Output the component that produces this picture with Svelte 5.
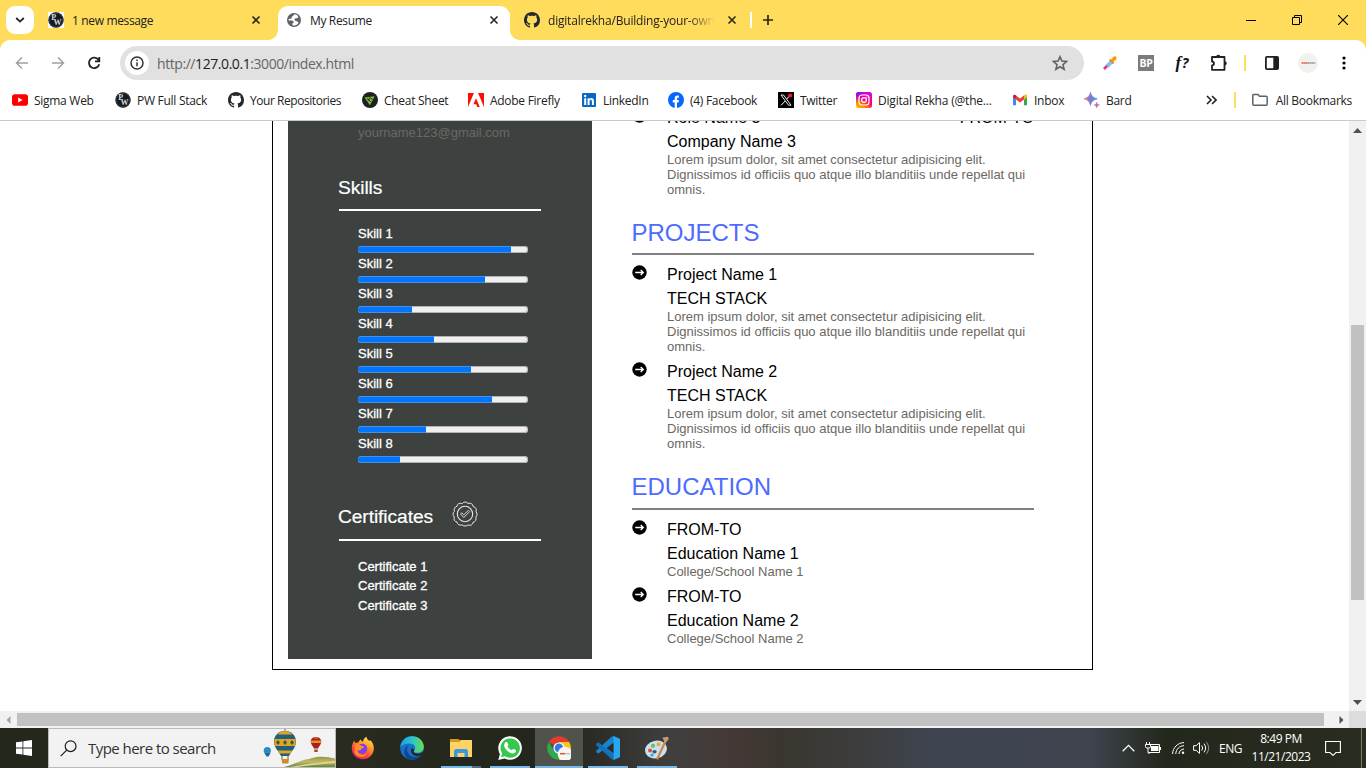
<script>
  const bookmarks = [
    { icon: 'youtube', label: 'Sigma Web', w: 103 },
    { icon: 'pw', label: 'PW Full Stack', w: 113 },
    { icon: 'github', label: 'Your Repositories', w: 134 },
    { icon: 'cheat', label: 'Cheat Sheet', w: 106 },
    { icon: 'adobe', label: 'Adobe Firefly', w: 113 },
    { icon: 'linkedin', label: 'LinkedIn', w: 87 },
    { icon: 'facebook', label: '(4) Facebook', w: 110 },
    { icon: 'x', label: 'Twitter', w: 78 },
    { icon: 'instagram', label: 'Digital Rekha (@the...', w: 156 },
    { icon: 'gmail', label: 'Inbox', w: 72 },
    { icon: 'bard', label: 'Bard', w: 72 }
  ];
  const skills = [90, 74.7, 31.7, 44.7, 66.5, 79, 40, 24.7];
  const certificates = [1, 2, 3];
  const projects = [1, 2];
  const schools = [1, 2];
  const apps = ['firefox', 'edge', 'explorer', 'whatsapp', 'chrome', 'vscode', 'paint'];
</script>

{#snippet closeIcon()}
  <svg class="close" width="10" height="10" viewBox="0 0 10 10"><path d="M1.5 1.5 8.5 8.5M8.5 1.5 1.5 8.5" stroke="#2b2718" stroke-width="1.6" /></svg>
{/snippet}

{#snippet arrowBullet()}
  <svg class="bullet" width="15" height="15" viewBox="0 0 15 15"><circle cx="7.5" cy="7.5" r="7.2" /><path d="M3.2 7.5h8M8.7 5l2.6 2.5L8.7 10" fill="none" stroke="#fff" stroke-width="1.3" /></svg>
{/snippet}

{#snippet lorem()}
  <p class="lorem">Lorem ipsum dolor, sit amet consectetur adipisicing elit. Dignissimos id officiis quo atque illo blanditiis unde repellat qui omnis.</p>
{/snippet}

{#snippet siteIcon(name)}
  <svg class="site" width="16" height="16" viewBox="0 0 16 16">
    {#if name === 'youtube'}
      <rect y="2.3" width="16" height="11.4" rx="2.8" fill="#f00" /><path d="M6.2 5.6v4.8L10.6 8z" fill="#fff" />
    {:else if name === 'pw'}
      <circle cx="8" cy="8" r="7.7" fill="#151a20" />
      <circle cx="8" cy="8" r="7" fill="none" stroke="#4b5056" stroke-width=".7" />
      <text x="3.2" y="8.4" class="monogram">P</text><text x="5.6" y="13.2" class="monogram">W</text>
    {:else if name === 'github'}
      <path fill="#24292f" d="M8 0C3.58 0 0 3.58 0 8c0 3.54 2.29 6.53 5.47 7.59.4.07.55-.17.55-.38 0-.19-.01-.82-.01-1.49-2.01.37-2.53-.49-2.69-.94-.09-.23-.48-.94-.82-1.13-.28-.15-.68-.52-.01-.53.63-.01 1.08.58 1.23.82.72 1.21 1.87.87 2.33.66.07-.52.28-.87.51-1.07-1.78-.2-3.64-.89-3.64-3.95 0-.87.31-1.59.82-2.15-.08-.2-.36-1.02.08-2.12 0 0 .67-.21 2.2.82.64-.18 1.32-.27 2-.27s1.36.09 2 .27c1.53-1.04 2.2-.82 2.2-.82.44 1.1.16 1.92.08 2.12.51.56.82 1.27.82 2.15 0 3.07-1.87 3.75-3.65 3.95.29.25.54.73.54 1.48 0 1.07-.01 1.93-.01 2.2 0 .21.15.46.55.38A8.01 8.01 0 0 0 16 8c0-4.42-3.58-8-8-8z" />
    {:else if name === 'cheat'}
      <circle cx="8" cy="8" r="8" fill="#1d2025" /><path d="M2.5 5.6 12.6 4.2 8 13.2z" fill="#86bd34" /><path d="M5 6.6 8.7 9.7M8.2 5.5l2.2 2.4M6.3 8.5l1.5-2.7" stroke="#1d2025" stroke-width="1" />
    {:else if name === 'adobe'}
      <path fill="#fa0f00" d="M0 1h5.9L0 15zM10.1 1H16v14zM8 6.2 11.8 15H9.3l-1.1-2.8H5.4z" />
    {:else if name === 'linkedin'}
      <rect x="1" y="1" width="14" height="14" rx="1" fill="#0a66c2" /><path fill="#fff" d="M3.2 6.2h2V13h-2zM6.6 6.2h2v1c.9-1.7 4.3-1.6 4.3 1.6V13h-2V9.4c0-2.2-2.3-2-2.3 0V13h-2z" /><circle cx="4.2" cy="4" r="1.2" fill="#fff" />
    {:else if name === 'facebook'}
      <circle cx="8" cy="8" r="8" fill="#0866ff" /><path fill="#fff" d="M6.7 16v-5.5H4.8V8h1.9V6.7c0-2.5 1.3-3.5 4.2-3v2.1c-1.5-.1-1.9.1-1.9 1.1V8h1.9l-.4 2.5H9V16z" />
    {:else if name === 'x'}
      <path d="M0 0h16v16H0z" /><path d="M3 3h2.5l7.5 10.2h-2.5z" fill="none" stroke="#fff" stroke-width=".9" /><path d="M12.2 3 8.8 7M7.2 9 3 13.4" stroke="#fff" stroke-width="1" /><circle cx="12.2" cy="3.5" r="2.1" fill="#ff1430" />
    {:else if name === 'instagram'}
      <defs>
        <linearGradient id="ig" x1=".1" y1="1" x2=".75" y2="0"><stop stop-color="#ffc800" /><stop offset=".3" stop-color="#ff7400" /><stop offset=".55" stop-color="#ff0076" /><stop offset="1" stop-color="#d800ec" /></linearGradient>
        <radialGradient id="igb" cx="0" cy="0" r=".7"><stop stop-color="#6a1cff" /><stop offset="1" stop-color="#a000ff" stop-opacity="0" /></radialGradient>
      </defs>
      <rect width="16" height="16" rx="2.6" fill="url(#ig)" /><rect width="16" height="16" rx="2.6" fill="url(#igb)" />
      <rect x="3" y="3" width="10" height="10" rx="3" fill="none" stroke="#fff" stroke-width="1.2" /><circle cx="8" cy="8" r="2.4" fill="none" stroke="#fff" stroke-width="1.2" /><circle cx="10.9" cy="5.1" r=".7" fill="#fff" />
    {:else if name === 'gmail'}
      <path d="M1 4.2v9h3V7.4z" fill="#4285f4" /><path d="M12 7.4v5.8h3v-9z" fill="#34a853" /><path d="M1 4.4c0-2 1.7-2 2.6-1.3L4.2 3.6v4L1 5.3z" fill="#c5221f" /><path d="M4 3.4 8 6.5l4-3.1v4L8 10.5 4 7.4z" fill="#ea4335" /><path d="m12 3.4.5-.4c1-.7 2.5-.5 2.5 1.2v1.1l-3 2.2z" fill="#fbbc04" />
    {:else}
      <defs><linearGradient id="bd"><stop stop-color="#f08a5e" /><stop offset=".4" stop-color="#8b78cf" /><stop offset="1" stop-color="#3d8bea" /></linearGradient></defs>
      <path fill="url(#bd)" d="M6.5.2C7.5 4.2 9 5.7 13.2 6.8 9 7.9 7.5 9.3 6.5 13.5 5.5 9.3 4 7.9-.2 6.8 4 5.7 5.5 4.2 6.5.2z" stroke="url(#bd)" stroke-width=".7" /><path fill="#b66aa9" stroke="#b66aa9" stroke-width=".5" d="M12.7 10.2c.5 1.9 1 2.4 2.9 2.8-1.9.4-2.4 1-2.9 2.8-.5-1.8-1-2.4-2.8-2.8 1.8-.4 2.3-.9 2.8-2.8z" />
    {/if}
  </svg>
{/snippet}

{#snippet appIcon(name)}
  <svg width="24" height="24" viewBox="0 0 24 24">
    {#if name === 'firefox'}
      <defs><linearGradient id="ff" x1=".85" y1="0" x2=".3" y2="1"><stop stop-color="#fff04a" /><stop offset=".4" stop-color="#ff9a22" /><stop offset=".75" stop-color="#ff3b47" /><stop offset="1" stop-color="#e5226b" /></linearGradient></defs>
      <path fill="url(#ff)" d="M3.2 4.5c.2 1.2.7 2 1.3 2.5.9-.5 2-.7 3-.5C8 4.8 9.2 3.8 10 3.5c0 1 .5 1.7 2 2.2C12 3.5 13.5 1.5 15.5.7c0 2 1.500 3 3 4.500.2-.5.2-1 .1-1.400C21.500 6 23 9 22.800 13c-.3 5.500-5 10.200-11 10.200C5.500 23.200.8 18.500.8 12.500c0-3 .9-5.500 2.400-8z" />
      <circle cx="11.3" cy="12.7" r="5" fill="#7a3ff0" /><path fill="#ff9124" d="M4 9.5c2.5-1.5 5-1 6.5.5 1.2 0 2.6.2 2.5 1-.3 1.2-2 1-2.8 2.2-1.2 1.8-3 1.500-3.700.4C6 18 11 20.500 16 17.500c-2 5-11 5-12.500-1.500z" />
    {:else if name === 'edge'}
      <defs><linearGradient id="eg" x1="0" y1=".4" x2="1" y2=".4"><stop stop-color="#1e9de2" /><stop offset=".5" stop-color="#2cc3d1" /><stop offset="1" stop-color="#68df4a" /></linearGradient><linearGradient id="eb" x1="0" y1="0" x2="0" y2="1"><stop stop-color="#1679c7" /><stop offset="1" stop-color="#1a68c5" /></linearGradient></defs>
      <circle cx="12" cy="12" r="11.8" fill="url(#eb)" /><path fill="url(#eg)" d="M.2 11.5C.8 5 5.5.2 12 .2c7 0 11.8 5 11.8 10.3 0 4.5-3.5 6.3-6.3 6.3-2.5 0-4.2-.8-3.2-2.3 2.5-3.7-.6-7-4.5-7C5.5 7.5 1.5 9 .2 11.5z" /><path fill="#0c4790" d="M9.5 8.5C6.5 10.5 6.5 14 8 17c1.7 3.5 6.5 6 13 2.2-3.5 5.8-12.5 6-15.5.8C3 15.5 5 10 9.5 8.5z" /><path fill="#24291f" d="M14 14.5c-1.2 1.8 1 3 3.6 3 2.4 0 4.2-.6 5.4-1.5l1 .5-1.3 2.3c-2.2 1-4.2 1.4-6 1.2-4-.5-6.5-3.5-5.5-7.2.5-1.5 3.5-.3 2.8 1.7z" />
    {:else if name === 'explorer'}
      <path fill="#d99b1a" d="M1 3h8.5l1.5 1.5L9.5 7H1z" /><path fill="#fcd364" d="M1 6h9l1.5-2H23v17H1z" /><path fill="#3b97df" d="M5 21v-5.5c0-1.5 1-2.5 2.5-2.5h9c1.5 0 2.5 1 2.5 2.5V21h-3.500v-4h-7v4z" /><path fill="#fcd364" d="M9.5 17h5v3h-5z" />
    {:else if name === 'whatsapp'}
      <path fill="#fff" d="M.3 24l1.6-6A11.8 11.8 0 1 1 6.5 22.4z" /><path fill="#35c84e" d="m3 21.3 1.1-3.9A9.7 9.7 0 1 1 6.9 20.2z" /><path fill="#fff" d="M8.3 6c.6 0 .9.1 1.1.6l.9 2c.2.5-.4 1.2-.9 1.7 1 1.9 2.6 3.3 4.5 4 .6-.6 1.2-1.5 1.7-1.2l2.1 1c.5.3.4.8.2 1.4-.6 1.5-2.4 2.1-3.7 1.9-3.5-.6-6.9-4-7.9-7C5.8 8.5 6.8 6 8.3 6z" />
    {:else if name === 'chrome'}
      <path fill="#e33b2e" d="M12 12 1.8 6A11.8 11.8 0 0 1 22.2 6z" /><path fill="#fcc31e" d="M12 12V6h10.2A11.8 11.8 0 0 1 12 23.8z" /><path fill="#2da94f" d="M1.8 6 7 15l5 2.5V23.8A11.8 11.8 0 0 1 1.8 6z" /><circle cx="12" cy="12" r="5.6" fill="#fff" /><circle cx="12" cy="12" r="4.4" fill="#3478e5" /><circle cx="18" cy="18" r="7.3" fill="#f7f6f4" /><path d="M13 17.7h5" stroke="#db5337" stroke-width="1.5" /><path d="M18.2 17.7h5" stroke="#aaa" stroke-width="1" />
    {:else if name === 'vscode'}
      <path fill="#1684ce" d="m17.5 0 6 2.7v18.6l-6 2.7L7 14.1 2.5 17.5.2 16.2v-1.4l15.3-14z" /><path fill="#2aa7f2" d="M17.5 0 24 3v18l-6.5 3z" /><path fill="#1273ba" d="M2.5 6.5.2 7.8v1.4L15.5 23l2 .8V17.7z" /><path fill="#2a2b26" d="M17.5 6.7v10.6L10.6 12z" />
    {:else}
      <ellipse cx="11" cy="13.5" rx="11" ry="8.8" fill="#c7e2f3" transform="rotate(-12 11 13.5)" /><circle cx="5" cy="14.5" r="2" fill="#d94f48" /><circle cx="8" cy="9.8" r="2.1" fill="#7db84b" /><circle cx="13.5" cy="8.2" r="2" fill="#f0a63a" /><ellipse cx="9.5" cy="15.8" rx="2.2" ry="1.7" fill="#315b7a" /><circle cx="7" cy="19" r="1.6" fill="#4a96d0" /><path d="m20.5 5-8 17.5" stroke="#d5883d" stroke-width="2.3" stroke-linecap="round" /><path fill="#c69a70" d="m17.5 1.5 5.5-.7.8 2.5-3.8 4z" />
    {/if}
  </svg>
{/snippet}

<div class="screen">
  <header class="tabs">
    <div class="tab-search"><svg width="10" height="8" viewBox="0 0 10 8"><path d="m1.2 2 3.8 3.6L8.8 2" fill="none" stroke="#222" stroke-width="1.8" /></svg></div>
    <div class="tab first"><span class="fav white">{@render siteIcon('pw')}</span><span class="title">1 new message</span>{@render closeIcon()}</div>
    <div class="tab active">
      <svg class="globe" width="14" height="14" viewBox="0 0 14 14"><circle cx="7" cy="7" r="7" fill="#5f6368" /><path fill="#fff" d="M7.5 1.3C6.5 2 6.4 3 5.5 3.3 4.3 3.6 5 5 4.3 5.5 3.6 6 2.3 5.7 1.4 6.3c0 1 .6 1.4 1.6 1.3 1.6-.1 3.6 0 3.7 1.3.1 1.3-1.3.8-1.4 2-.1.7.3 1.3.9 1.7 2.3.3 4.5-1 5.5-3-1-.3-1.3-1.6-2.5-1.7-1.5-.1-2-.9-1.6-1.9.4-1.2 2-.6 2.9-1 .6-.3.5-1 .6-1.7C10.2 2 9 1.4 7.5 1.3z" /></svg>
      <span class="title">My Resume</span>{@render closeIcon()}
    </div>
    <div class="tab third"><span class="fav">{@render siteIcon('github')}</span><span class="title fade">digitalrekha/Building-your-own</span>{@render closeIcon()}</div>
    <i class="tab-sep"></i>
    <svg class="plus" width="12" height="12" viewBox="0 0 12 12"><path d="M6 1v10M1 6h10" stroke="#2b2718" stroke-width="1.7" /></svg>
    <div class="window-controls">
      <svg width="10" height="10" viewBox="0 0 10 10"><path d="M0 5.5h10" stroke="#000" /></svg>
      <svg width="10" height="10" viewBox="0 0 10 10"><path d="M.5 2.5h7v7h-7zM2.5 2.5v-2h7v7h-2" fill="none" stroke="#000" /></svg>
      <svg width="10" height="10" viewBox="0 0 10 10"><path d="m0 0 10 10M10 0 0 10" stroke="#000" stroke-width="1.1" /></svg>
    </div>
  </header>

  <div class="toolbar-back">
    <div class="toolbar">
      <svg class="nav" width="14" height="14" viewBox="0 0 14 14"><path d="M13 7H2M7 1.5 1.5 7 7 12.5" fill="none" stroke="#a0a0a0" stroke-width="1.5" /></svg>
      <svg class="nav" width="14" height="14" viewBox="0 0 14 14"><path d="M1 7h11M7 1.5 12.5 7 7 12.5" fill="none" stroke="#a0a0a0" stroke-width="1.5" /></svg>
      <svg class="nav" width="14" height="14" viewBox="0 0 14 14"><path d="M11.5 4A5.2 5.2 0 1 0 12.2 8.2M12.3 1v4.3H8" fill="none" stroke="#202124" stroke-width="1.8" /></svg>
      <div class="address">
        <span class="info"><svg width="14" height="14" viewBox="0 0 14 14"><circle cx="7" cy="7" r="6" fill="none" stroke="#333" stroke-width="1.5" /><path d="M7 6.2v4M7 3.5v1.5" stroke="#333" stroke-width="1.5" /></svg></span>
        <span class="url">http://<b>127.0.0.1</b>:3000/index.html</span>
        <svg class="star" width="16" height="16" viewBox="0 0 16 16"><path d="m8 1.7 1.9 4.4 4.7.4L11 9.6l1.1 4.7L8 11.8l-4.1 2.5L5 9.6 1.4 6.5l4.7-.4z" fill="none" stroke="#5f6368" stroke-width="1.6" /></svg>
      </div>
      <svg class="dropper" width="14" height="14" viewBox="0 0 14 14"><path d="m2.5 9 4.3-4.3 2.8 2.8L5.2 12z" fill="#74c6f5" /><path d="M1 13 4 9.9" stroke="#ed2b79" stroke-width="2.6" /><path d="m6 4 1.2-1 4 4-1.2 1z" fill="#ef6c00" /><path d="m8 3.7 2.5-2.9c2-1.5 4 .7 2.6 2.6L10.2 6z" fill="#ff9800" /></svg>
      <span class="bp">BP</span>
      <span class="fq">f<i>?</i></span>
      <svg class="puzzle" width="18" height="18" viewBox="0 0 18 18"><path d="M2 3h12.5v12.8H2v-4.3c2.6-.2 2.6-3.7 0-4z" fill="none" stroke="#202124" stroke-width="1.8" stroke-linejoin="round" /><path d="M6.2 3a2.1 2.3 0 0 1 4.2 0zM14.5 7.2a2.3 2.1 0 0 1 0 4.2z" fill="#202124" /></svg>
      <i class="yellow-sep"></i>
      <svg class="panel" width="14" height="14" viewBox="0 0 14 14"><rect x=".9" y=".9" width="12.2" height="12.2" rx="1" fill="none" stroke="#202124" stroke-width="1.8" /><path d="M8.3 1H13v12H8.3z" fill="#202124" /></svg>
      <svg class="profile" width="20" height="20" viewBox="0 0 20 20"><circle cx="10" cy="10" r="10" fill="#f3f1ee" /><path d="M3.5 10H10" stroke="#e46449" stroke-width="1.7" stroke-dasharray="1.8 .2" /><path d="M10 10h7.5" stroke="#666" stroke-width="1.2" stroke-dasharray="1.5 .3" /></svg>
      <svg class="kebab" width="4" height="14" viewBox="0 0 4 14"><circle cx="2" cy="2" r="1.6" /><circle cx="2" cy="7" r="1.6" /><circle cx="2" cy="12" r="1.6" /></svg>
    </div>
    <nav class="bookmarks">
      {#each bookmarks as mark}
        <div class="bookmark {mark.icon}" style:width="{mark.w}px">{@render siteIcon(mark.icon)}<span>{mark.label}</span></div>
      {/each}
      <div class="bookmark-end">
        <svg width="11" height="10" viewBox="0 0 11 10"><path d="m1 1 4 4-4 4M6 1l4 4-4 4" fill="none" stroke="#202124" stroke-width="1.6" /></svg>
        <i class="yellow-sep"></i>
        <svg class="folder" width="16" height="14" viewBox="0 0 16 14"><path d="M1.5 1.5H6L7.5 3.2h6.7q1 0 1 1v7q0 1-1 1H1.8q-1 0-1-1V2.2q0-.7.7-.7z" fill="none" stroke="#5f6368" stroke-width="1.5" /></svg>
        <span>All Bookmarks</span>
      </div>
    </nav>
  </div>

  <div class="viewport">
    <main class="page">
      <div class="resume">
        <aside>
          <p class="email">yourname123@gmail.com</p>
          <h3 class="side-head">Skills</h3>
          <div class="skills">
            {#each skills as level, i}
              <div class="skill"><span>Skill {i + 1}</span><div class="meter"><div class="fill" style:width="{level}%"></div></div></div>
            {/each}
          </div>
          <h3 class="side-head certs">Certificates
            <svg width="26" height="26" viewBox="0 0 26 26" fill="none" stroke="#e7e9e8"><path d="M13 1q2 0 3 1.5 2-.8 3.5.2t1.6 2.8q2 .3 2.8 2t.1 3.3Q25 12 25 13.500t-1.200 2.700q.7 1.800-.2 3.300t-2.600 1.800q-.2 2-1.700 2.700t-3.300-.1Q15 25 13 25t-3-1.200q-1.800.8-3.300-.1T5 21q-2-.3-2.700-1.800t.1-3.200Q1 15 1 13.300t1.400-2.900q-.7-1.800.2-3.300T5 5.300q.3-2 1.800-2.700t3.300.1Q11 1 13 1z" /><circle cx="13" cy="13" r="7.7" stroke-width="1.1" /><path d="m8.500 13 1.300-1.200 2 2 4.700-4.500 1.200 1.200-5.900 6z" stroke-width=".9" /></svg>
          </h3>
          <ul>
            {#each certificates as n}<li>Certificate {n}</li>{/each}
          </ul>
        </aside>
        <section class="body">
          <article>
            {@render arrowBullet()}
            <div class="entry"><h4 class="split"><span>Role Name 3</span><span>FROM-TO</span></h4><h5>Company Name 3</h5>{@render lorem()}</div>
          </article>
          <h2>PROJECTS</h2>
          {#each projects as n}
            <article>
              {@render arrowBullet()}
              <div class="entry"><h4>Project Name {n}</h4><h5>TECH STACK</h5>{@render lorem()}</div>
            </article>
          {/each}
          <h2 class="edu">EDUCATION</h2>
          {#each schools as n}
            <article>
              {@render arrowBullet()}
              <div class="entry"><h4>FROM-TO</h4><h5>Education Name {n}</h5><p class="school">College/School Name {n}</p></div>
            </article>
          {/each}
        </section>
      </div>
    </main>
    <div class="vbar">
      <svg width="9" height="5" viewBox="0 0 9 5"><path d="M0 5 4.5 0 9 5z" fill="#505050" /></svg>
      <div class="vthumb"></div>
      <svg width="9" height="5" viewBox="0 0 9 5"><path d="m0 0 4.5 5L9 0z" fill="#505050" /></svg>
    </div>
  </div>
  <div class="hbar">
    <svg width="5" height="8" viewBox="0 0 5 8"><path d="M4.5 0 .5 4l4 4z" fill="#a3a3a3" /></svg>
    <div class="hthumb"></div>
    <svg class="hright" width="5" height="8" viewBox="0 0 5 8"><path d="m.5 0 4 4-4 4z" fill="#505050" /></svg>
    <div class="corner"></div>
  </div>

  <footer class="taskbar">
    <div class="start"><svg width="16" height="16" viewBox="0 0 16 16" fill="#fff"><path d="M0 2.3 6.5 1.4v6.2H0zM7.3 1.3 16 0v7.6H7.3zM0 8.4h6.5v6.2L0 13.7zM7.3 8.4H16V16l-8.7-1.3z" /></svg></div>
    <div class="search">
      <svg width="17" height="17" viewBox="0 0 17 17" fill="none" stroke="#1c1c1c" stroke-width="1.2"><circle cx="10.6" cy="6.2" r="5.4" /><path d="m6.7 10.2-6 6" /></svg>
      <span>Type here to search</span>
      <svg class="balloons" width="73" height="38" viewBox="0 0 73 38">
        <defs><linearGradient id="hill" x1="0" y1="0" x2="0" y2="1"><stop stop-color="#8a9a3b" /><stop offset=".5" stop-color="#c5b76a" /><stop offset="1" stop-color="#5b8b32" /></linearGradient></defs>
        <path d="M22 38c10-2 15-7 25-8 10-4 19-2 26-.5V38z" fill="url(#hill)" /><path d="M28 38c14-3 27-4 45-6v2c-16 1-28 3-38 4z" fill="#e6d391" />
        <circle cx="5.3" cy="21.5" r="3.6" fill="#2b8cc1" /><path d="m2.5 24 2 3.500h2l2-3.500z" fill="#1a6a9b" />
        <path d="M23 2c7 0 11 4.8 11 10.7 0 5.8-5 9.8-7 14.3h-8c-2-4.5-7-8.5-7-14.3C12 6.8 16 2 23 2z" fill="#215f7a" />
        <path d="M17 4q2.5-2 6-2t6 2l1.500 1.500h-15zM12.500 10h21q.8 3.500-.7 7H13.200q-1.500-3.500-.7-7zM15.500 21.500h15l-2 3h-11z" fill="#e0a428" />
        <path d="m16 11 2 2.500-2 2.500-2-2.500zm7 0 2 2.500-2 2.500-2-2.500zm7 0 2 2.500-2 2.500-2-2.500z" fill="#395b32" /><path d="M20 27v3.500M26 27v3.500M23 0v2" stroke="#855522" /><path d="M19.500 30h7.500l-.7 4.500h-6z" fill="#cf8c25" />
        <path d="M54 8c3.500 0 5.300 2.200 5.300 4.800S57 17 56 19.500h-4c-1-2.500-3.300-4-3.300-6.700S50.500 8 54 8z" fill="#a3221d" /><path d="M49 11.500h10v2.500H49zM52 8.500h4v1h-4z" fill="#ef8d20" /><path d="M52.300 20.500h3.400v2.500h-3.400z" fill="#a54720" />
      </svg>
    </div>
    <div class="apps">
      {#each apps as app}
        <div class="app {app}">{@render appIcon(app)}</div>
      {/each}
    </div>
    <div class="tray">
      <svg width="13" height="8" viewBox="0 0 13 8"><path d="M.7 7.2 6.5 1.4l5.8 5.8" fill="none" stroke="#fff" stroke-width="1.3" /></svg>
      <svg class="battery" width="16" height="12" viewBox="0 0 16 12"><path d="M5 2.5h9.5v8H4M15.500 5v3" fill="none" stroke="#fff" /><path d="M6 4h7.500v5H6z" fill="#fff" /><path d="M1.500 0v3M4.500 0v3M.5 2.500h5v2q0 1.500-1.500 1.500H2Q.5 6 .5 4.500zM3 6v5h2" fill="none" stroke="#fff" /></svg>
      <svg class="wifi" width="13" height="12" viewBox="0 0 13 12" fill="none" stroke="#fff"><path d="M.6 12C.6 5.8 5.8.6 12 .6M3.8 12C3.8 7.5 7.5 3.7 12 3.7M7 12c0-2.7 2.3-5 5-5" /><circle cx="11" cy="10.7" r="1.2" fill="#fff" stroke="none" /></svg>
      <svg class="speaker" width="17" height="14" viewBox="0 0 17 14" fill="none" stroke="#fff"><path d="M.6 4.7h2.6L6.5 1.5v11L3.2 9.3H.6zM8.7 4.5q2 2.5 0 5M11 2.7q3.3 4.3 0 8.6" /><path d="M13.4 1q4.5 6 0 12" opacity=".5" /></svg>
      <span class="lang">ENG</span>
      <div class="clock"><span>8:49 PM</span><span>11/21/2023</span></div>
      <svg class="note" width="16" height="16" viewBox="0 0 16 16"><path d="M.6 1.5h14.8v11H11l-3 2.9-3-2.9H.6z" fill="none" stroke="#fff" stroke-width="1.1" /></svg>
      <i class="desk"></i>
    </div>
  </footer>
</div>

<style>
  :global(body) { margin: 0; overflow: hidden; }
  .screen, .screen :global(*) { box-sizing: border-box; }
  .screen { width: 1366px; height: 768px; display: flex; flex-direction: column; background: #fff; font-family: "Open Sans", "Noto Sans", sans-serif; font-size: 12px; color: #222; overflow: hidden; }
  svg { display: block; flex: none; }
  h2, h3, h4, h5, p, ul { margin: 0; padding: 0; font-weight: 400; list-style: none; }
  .monogram { font: bold 8px "Liberation Serif", serif; fill: #d8dadc; }

  .tabs { height: 40px; background: #ffdc5c; display: flex; align-items: center; flex: none; }
  .tab-search { width: 28px; height: 28px; margin-left: 6px; border-radius: 9px; background: #fff; display: grid; place-items: center; }
  .tab { display: flex; align-items: center; }
  .tab .title { flex: 1; white-space: nowrap; overflow: hidden; line-height: 18px; padding-top: 1px; letter-spacing: -.35px; }
  .first { width: 244px; padding: 0 17px 0 14px; }
  .fav { margin-right: 8px; }
  .white { background: #fff; }
  .active { position: relative; width: 232px; height: 34px; align-self: flex-end; padding: 0 11px 6px 9px; background: #fff; border-radius: 10px 10px 0 0; }
  .active .title { margin-left: 9px; }
  .active::before, .active::after { content: ""; position: absolute; bottom: 0; width: 10px; height: 10px; }
  .active::before { left: -10px; background: radial-gradient(circle at 0 0, transparent 9.5px, #fff 10.3px); }
  .active::after { right: -10px; background: radial-gradient(circle at 100% 0, transparent 9.5px, #fff 10.3px); }
  .third { width: 240px; padding: 0 13px 0 14px; }
  .tab .fade { flex: none; width: 167px; margin-right: 12px; letter-spacing: -.2px; -webkit-mask-image: linear-gradient(90deg, #000 84%, transparent); mask-image: linear-gradient(90deg, #000 84%, transparent); }
  .tab-sep { width: 2px; height: 16px; background: #fff; }
  .plus { margin-left: 10px; }
  .window-controls { margin-left: auto; display: flex; gap: 36px; padding-right: 18px; }

  .toolbar-back { height: 81px; flex: none; border-bottom: 1px solid #c9c9c9; background: linear-gradient(#ffdc5c 20px, #fff 20px); }
  .toolbar { height: 46px; display: flex; align-items: center; padding-left: 15px; background: #fff; border-radius: 10px 10px 0 0; }
  .nav { margin-right: 22px; }
  .nav:nth-child(3) { margin-right: 19px; }
  .address { width: 964px; height: 34px; border-radius: 17px; background: #e1e1e1; display: flex; align-items: center; padding: 0 16px 0 5px; }
  .info { width: 24px; height: 24px; background: #fff; border-radius: 50%; display: grid; place-items: center; }
  .url { margin-left: 8px; flex: 1; font-size: 14px; color: #666; letter-spacing: -.43px; }
  .url b { font-weight: 400; color: #222; }
  .dropper { margin-left: 19px; }
  .bp { width: 16px; height: 16px; margin-left: 21px; background: #7b7b7b; color: #fff; font: bold 10.5px/16px "Open Sans", sans-serif; text-align: center; letter-spacing: -.3px; }
  .fq { width: 20px; margin-left: 18px; font: italic bold 17px/20px "Liberation Serif", serif; color: #111; text-align: center; white-space: nowrap; }
  .fq i { font: italic bold 14px/20px "Open Sans", sans-serif; margin-left: 1px; }
  .puzzle { margin-left: 18px; }
  .yellow-sep { width: 2px; height: 16px; background: #ffdc5c; }
  .puzzle + .yellow-sep { margin-left: 16px; }
  .panel { margin-left: 19px; }
  .profile { margin-left: 19px; }
  .kebab { margin-left: 24px; }

  .bookmarks { height: 28px; display: flex; align-items: center; padding-left: 12px; }
  .bookmark { display: flex; align-items: center; gap: 6px; white-space: nowrap; letter-spacing: -.28px; }
  .bookmark.github { letter-spacing: -.45px; }
  .bookmark.instagram { letter-spacing: -.2px; }
  .bookmark-end { margin-left: auto; display: flex; align-items: center; padding-right: 14px; white-space: nowrap; letter-spacing: -.28px; }
  .bookmark-end .yellow-sep { margin-left: 17px; }
  .folder { margin: 0 8px 0 16px; }

  .viewport { height: 590px; display: flex; flex: none; overflow: hidden; font-family: "Liberation Sans", Arial, sans-serif; }
  .page { width: 1349px; height: 590px; padding-left: 272px; overflow: hidden; }
  .resume { width: 821px; height: 549px; display: flex; border: 1px solid #000; border-top: 0; padding-left: 15px; }
  aside { width: 304px; height: 538px; background: #3d4240; color: #fff; padding: 4px 51px 0 50px; }
  .email { padding-left: 20px; height: 51px; font-size: 13px; line-height: 15px; color: #6b6863; }
  .side-head { height: 35px; font-size: 19.2px; line-height: 24px; display: flex; align-items: flex-start; border-bottom: 2px solid #fff; width: 202px; margin-left: 1px; text-indent: -1px; letter-spacing: -.08px; -webkit-text-stroke: .2px #fff; }
  .skills { padding: 15px 0 0 20px; }
  .skill { height: 30px; font-size: 13px; line-height: 16px; -webkit-text-stroke: .3px #fff; }
  .skill span { display: block; }
  .meter { width: 170px; height: 7px; margin-top: 4px; border-radius: 4px; background: #efefef; overflow: hidden; box-shadow: inset 0 0 0 1px #b2b2b2; }
  .fill { height: 100%; background: #0075ff; box-shadow: inset 0 1px #4a90dc, inset 0 -1px #4a90dc; }
  .certs { margin-top: 35px; height: 40px; padding-top: 4px; }
  .certs svg { margin: -4px 0 0 19px; }
  ul { padding: 15.6px 0 0 20px; font-size: 13px; line-height: 19.5px; -webkit-text-stroke: .3px #fff; }
  .body { width: 403px; margin: -15px 0 0 39px; color: #000; }
  article { display: flex; margin-bottom: 6px; }
  .bullet { margin: 2px 20px 0 1px; }
  .entry { width: 367px; }
  h4, h5 { font-size: 16px; line-height: 24px; height: 24px; }
  h5 { height: 22px; }
  .split { display: flex; justify-content: space-between; }
  .lorem, .school { font-size: 13px; line-height: 15px; color: #6b6863; }
  h2 { height: 52px; margin: 0 0 8px 1px; padding-top: 16px; font-size: 24px; line-height: 28px; color: #4d6bff; border-bottom: 2px solid #808080; text-indent: -.5px; }
  .edu { height: 53px; }

  .vbar { width: 17px; background: #f1f1f1; display: flex; flex-direction: column; align-items: center; padding: 7px 0 6px; }
  .vthumb { width: 13px; height: 275px; margin: 192px 0 auto; background: #c1c1c1; }
  .hbar { height: 17px; flex: none; background: #f1f1f1; display: flex; align-items: center; padding-left: 6px; }
  .hthumb { width: 1307px; height: 13px; margin-left: 6px; background: #c1c1c1; }
  .hright { margin: 0 5px 0 auto; }
  .corner { width: 17px; height: 17px; background: #dcdcdc; }

  .taskbar { height: 40px; flex: none; display: flex; color: #fff; background: linear-gradient(90deg, #24271c 0, #292b20 340px, #22261b 520px, #2b2b26 590px, #403f3e 670px, #453937 730px, #3a362f 780px, #3d3e3f 870px, #3e4450 930px, #3f444f 1090px, #23281c 1165px, #292d20 1366px); }
  .start { width: 48px; display: grid; place-items: center; }
  .search { width: 288px; height: 40px; background: #f2f2f2; border: 1px solid #bababa; display: flex; align-items: center; padding-left: 11px; color: #333; font-size: 15px; }
  .search span { margin-left: 11px; letter-spacing: -.54px; white-space: nowrap; width: 175px; }
  .apps { display: flex; padding-left: 3px; gap: 1px; }
  .app { width: 48px; height: 40px; display: grid; place-items: center; position: relative; }
  .chrome { background: #50534b; }
  .explorer::after, .whatsapp::after, .chrome::after, .vscode::after, .paint::after { content: ""; position: absolute; bottom: 0; left: 4px; width: 40px; height: 2px; background: #76b9ed; }
  .chrome::after { left: 0; width: 48px; }
  .explorer::after { background: linear-gradient(90deg, #76b9ed 31px, #506f82 31px); }
  .tray { margin-left: auto; display: flex; align-items: center; padding-right: 4px; }
  .battery { margin-left: 10px; }
  .wifi { margin-left: 11px; }
  .speaker { margin-left: 8px; }
  .lang { margin-left: 9px; width: 25px; letter-spacing: -.45px; }
  .clock { width: 60px; margin-left: 7px; display: flex; flex-direction: column; align-items: center; line-height: 18px; letter-spacing: -.48px; }
  .note { margin-left: 14px; }
  .desk { width: 1px; height: 40px; margin-left: 20px; background: #777b70; }
</style>
